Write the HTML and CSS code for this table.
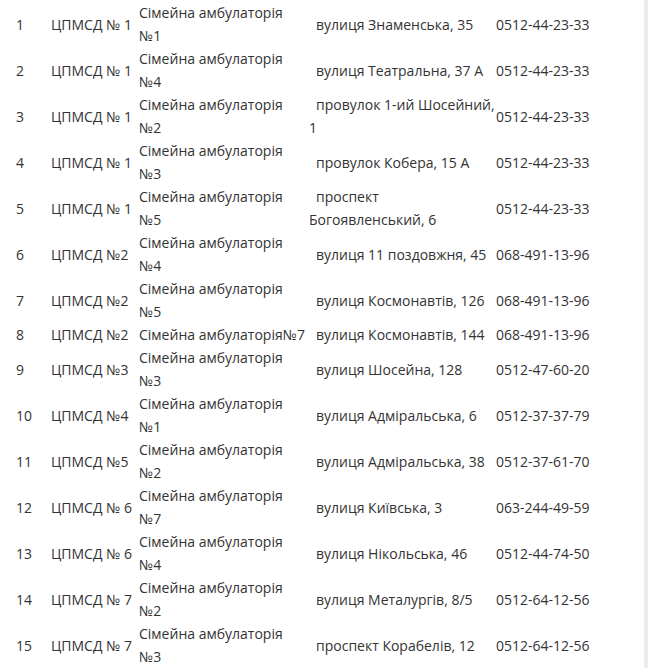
FILE: index.html
```html
<!DOCTYPE html>
<html lang="uk">
<head>
  <meta charset="UTF-8" />
  <title>Амбулаторії</title>
  <link rel="stylesheet" href="styles.css">
</head>
<body>
  <div class="page">
    <table class="clinics">
      <colgroup>
        <col class="c-num">
        <col class="c-center">
        <col class="c-name">
        <col class="c-addr">
        <col class="c-phone">
      </colgroup>
      <tbody>
        <tr><td>1</td><td>ЦПМСД № 1</td><td class="name">Сімейна амбулаторія №1</td><td class="addr">вулиця Знаменська, 35</td><td class="phone">0512-44-23-33</td></tr>
        <tr><td>2</td><td>ЦПМСД № 1</td><td class="name">Сімейна амбулаторія №4</td><td class="addr">вулиця Театральна, 37 А</td><td class="phone">0512-44-23-33</td></tr>
        <tr><td>3</td><td>ЦПМСД № 1</td><td class="name">Сімейна амбулаторія №2</td><td class="addr">провулок 1-ий Шосейний, 1</td><td class="phone">0512-44-23-33</td></tr>
        <tr><td>4</td><td>ЦПМСД № 1</td><td class="name">Сімейна амбулаторія №3</td><td class="addr">провулок Кобера, 15 А</td><td class="phone">0512-44-23-33</td></tr>
        <tr><td>5</td><td>ЦПМСД № 1</td><td class="name">Сімейна амбулаторія №5</td><td class="addr">проспект Богоявленський, 6</td><td class="phone">0512-44-23-33</td></tr>
        <tr><td>6</td><td>ЦПМСД №2</td><td class="name">Сімейна амбулаторія №4</td><td class="addr">вулиця 11 поздовжня, 45</td><td class="phone">068-491-13-96</td></tr>
        <tr><td>7</td><td>ЦПМСД №2</td><td class="name">Сімейна амбулаторія №5</td><td class="addr">вулиця Космонавтів, 126</td><td class="phone">068-491-13-96</td></tr>
        <tr><td>8</td><td>ЦПМСД №2</td><td class="name">Сімейна амбулаторія№7</td><td class="addr">вулиця Космонавтів, 144</td><td class="phone">068-491-13-96</td></tr>
        <tr><td>9</td><td>ЦПМСД №3</td><td class="name">Сімейна амбулаторія №3</td><td class="addr">вулиця Шосейна, 128</td><td class="phone">0512-47-60-20</td></tr>
        <tr><td>10</td><td>ЦПМСД №4</td><td class="name">Сімейна амбулаторія №1</td><td class="addr">вулиця Адміральська, 6</td><td class="phone">0512-37-37-79</td></tr>
        <tr><td>11</td><td>ЦПМСД №5</td><td class="name">Сімейна амбулаторія №2</td><td class="addr">вулиця Адміральська, 38</td><td class="phone">0512-37-61-70</td></tr>
        <tr><td>12</td><td>ЦПМСД № 6</td><td class="name">Сімейна амбулаторія №7</td><td class="addr">вулиця Київська, 3</td><td class="phone">063-244-49-59</td></tr>
        <tr><td>13</td><td>ЦПМСД № 6</td><td class="name">Сімейна амбулаторія №4</td><td class="addr">вулиця Нікольська, 46</td><td class="phone">0512-44-74-50</td></tr>
        <tr><td>14</td><td>ЦПМСД № 7</td><td class="name">Сімейна амбулаторія №2</td><td class="addr">вулиця Металургів, 8/5</td><td class="phone">0512-64-12-56</td></tr>
        <tr><td>15</td><td>ЦПМСД № 7</td><td class="name">Сімейна амбулаторія №3</td><td class="addr">проспект Корабелів, 12</td><td class="phone">0512-64-12-56</td></tr>
      </tbody>
    </table>
  </div>
</body>
</html>
```

FILE: styles.css
```css
html, body {
  margin: 0;
  height: 100%;
}

body {
  background-color: #efebeb;
  font-family: "Open Sans", "DejaVu Sans", sans-serif;
  font-size: 14px;
  color: #333;
}

.page {
  width: 644px;
  min-height: 100%;
  background-color: #fff;
  padding-top: 1px;
  box-sizing: border-box;
}

.clinics {
  margin-left: 13px;
  border-collapse: collapse;
  table-layout: fixed;
  width: 631px;
}

.c-num { width: 35px; }
.c-center { width: 88px; }
.c-name { width: 170px; }
.c-addr { width: 189px; }
.c-phone { width: 149px; }

.clinics td {
  padding: 0 0 0 3px;
  line-height: 23px;
  vertical-align: middle;
}

.clinics td.name {
  padding-right: 1px;
}

.clinics td.addr {
  text-indent: 7px;
}

.clinics td.phone {
  padding-left: 1px;
}
```
